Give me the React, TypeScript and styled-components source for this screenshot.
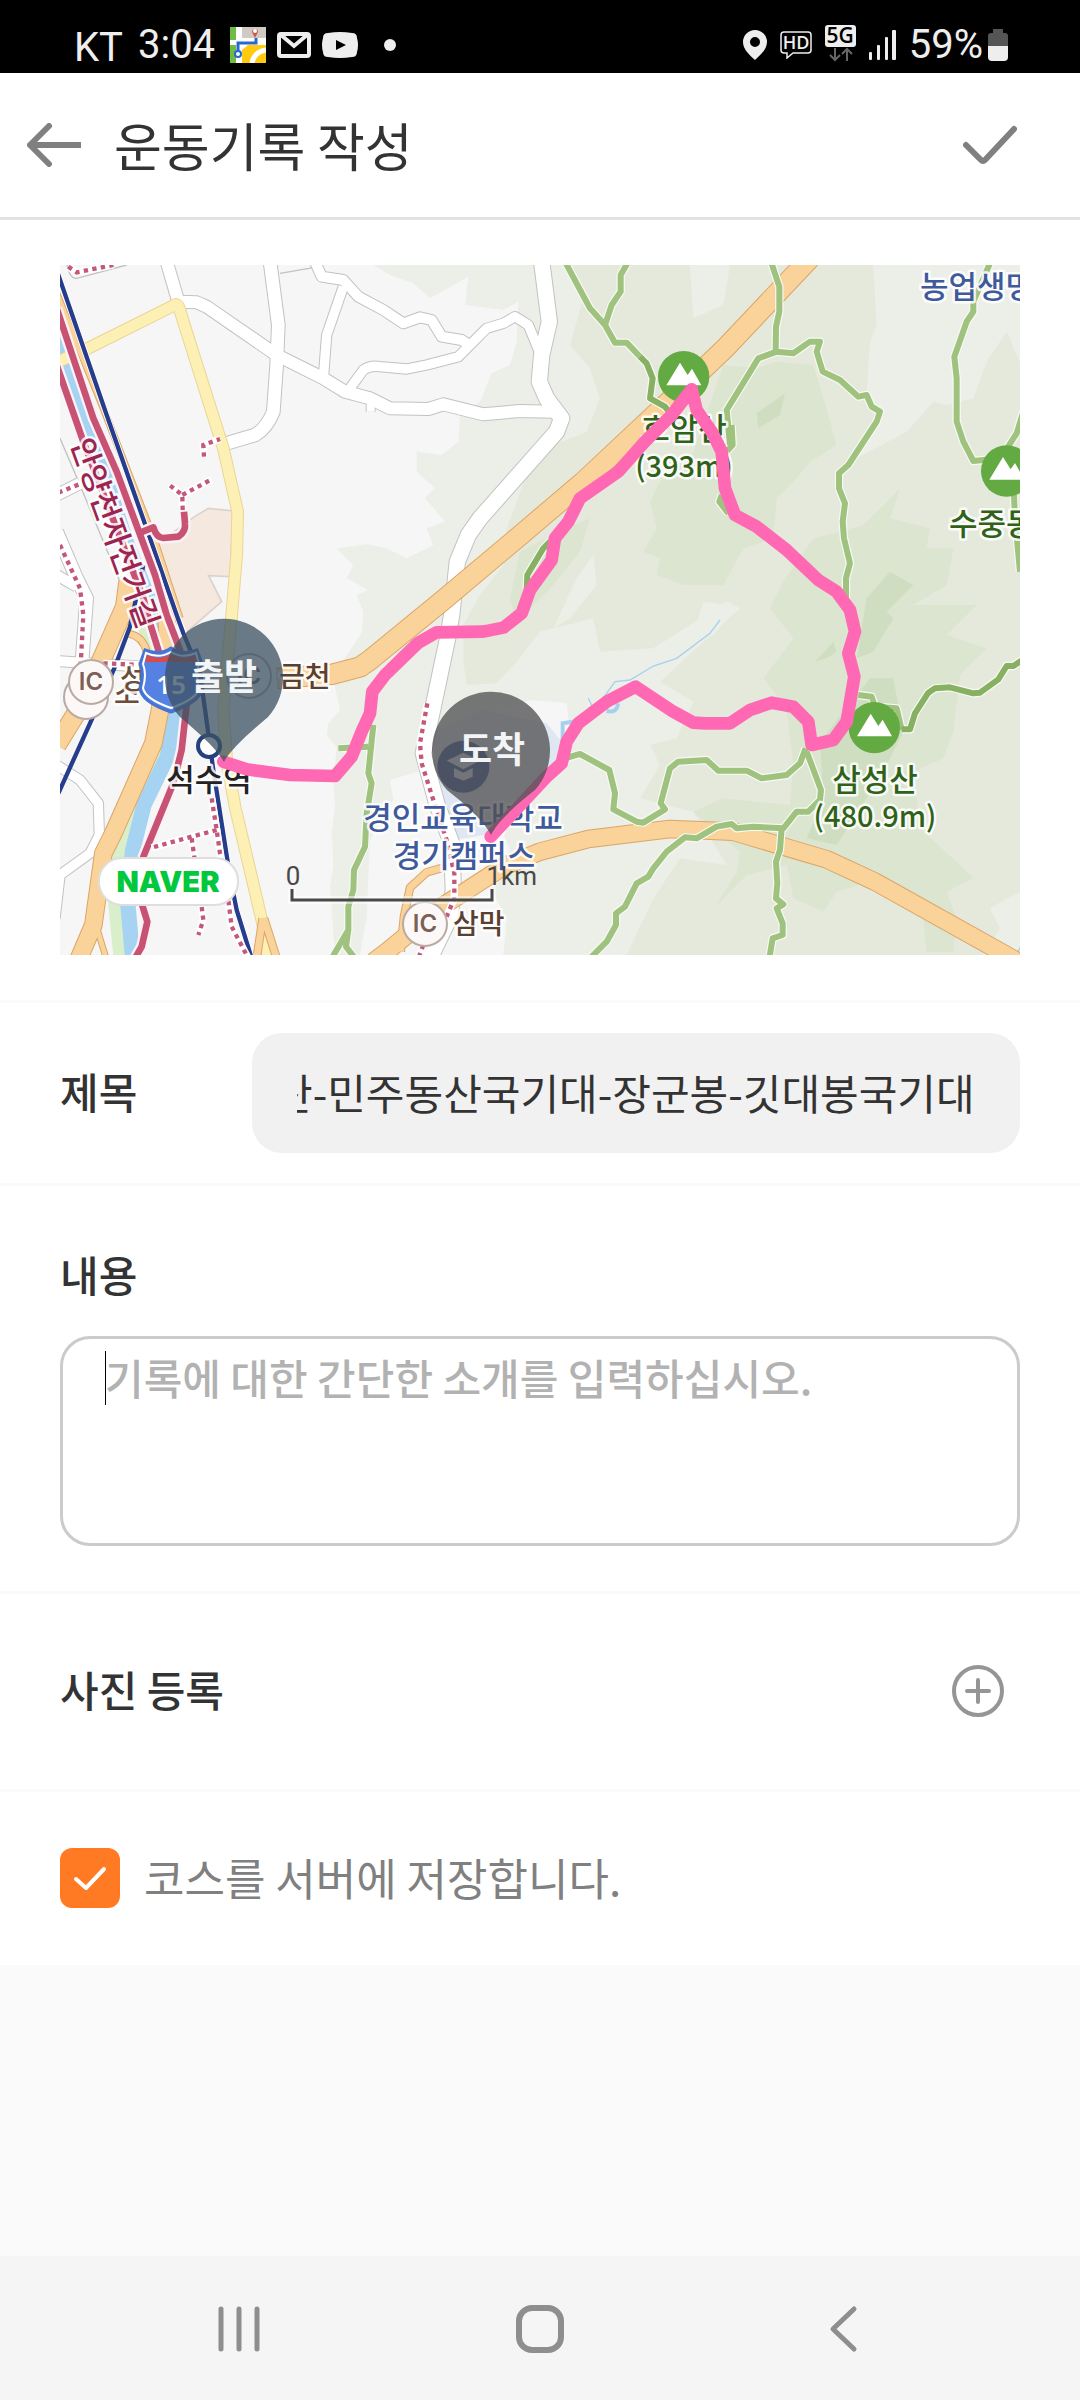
import React, { useLayoutEffect, useRef, useState } from "react";
import styled, { createGlobalStyle } from "styled-components";

const KR = '"Noto Sans CJK KR", "Noto Sans", sans-serif';
const LATIN = 'Roboto, "Noto Sans", sans-serif';

const GlobalStyle = createGlobalStyle`
  *, *::before, *::after { box-sizing: border-box; }
  body { margin: 0; background: #fafafa; font-family: ${KR}; color: #333; }
  button, input, textarea { font: inherit; color: inherit; }
`;

const Screen = styled.div`
  display: flex;
  flex-direction: column;
  min-height: 100vh;
`;

const StatusBar = styled.div`
  display: flex;
  justify-content: space-between;
  align-items: center;
  height: 73px;
  padding: 16px 72px 0 74px;
  background: #000;
  color: #eee;
  font-family: ${LATIN};
  svg { display: block; flex: none; }
`;

const StatusGroup = styled.div<{ $gap: number }>`
  display: flex;
  align-items: center;
  gap: ${(p) => p.$gap}px;
`;

const Carrier = styled.span`
  font-size: 40px;
  line-height: 48px;
  padding-top: 6px;
`;

const StatusText = styled.span`
  font-size: 40px;
  line-height: 48px;
`;

const MoreDot = styled.span`
  width: 12px;
  height: 12px;
  margin-left: 15px;
  border-radius: 50%;
  background: #eee;
`;

const Header = styled.header`
  display: flex;
  align-items: center;
  gap: 33px;
  height: 147px;
  padding: 0 63px 0 27px;
  background: #fff;
  border-bottom: 3px solid #e2e2e2;
`;

const Title = styled.h1`
  flex: 1;
  margin: 0;
  font-size: 52px;
  line-height: 76px;
  font-weight: 400;
`;

const IconButton = styled.button`
  display: flex;
  padding: 0;
  border: 0;
  background: none;
`;

const Section = styled.section<{ $pad: string; $last?: boolean }>`
  padding: ${(p) => p.$pad};
  background: #fff;
  border-bottom: ${(p) => (p.$last ? "0" : "3px solid #fafafa")};
`;

const MapView = styled.svg`
  display: block;
  width: 100%;
  height: auto;
`;

const Row = styled.div`
  display: flex;
  align-items: center;
`;

const SpreadRow = styled(Row)`
  justify-content: space-between;
`;

const fieldName = `
  padding-bottom: 4px;
  font-size: 42px;
  line-height: 56px;
  font-weight: 500;
`;

const FieldLabel = styled.label<{ $width?: number }>`
  ${fieldName}
  display: block;
  width: ${(p) => (p.$width ? p.$width + "px" : "auto")};
`;

const FieldHeading = styled.h2`
  ${fieldName}
  margin: 0;
`;

const TitleInput = styled.input`
  flex: 1;
  min-width: 0;
  height: 120px;
  padding: 0 45px 4px;
  border: 0;
  border-radius: 30px;
  background: #f1f1f1;
  font-size: 42px;
  outline: none;
`;

const NoteBox = styled.div`
  position: relative;
  margin-top: 30px;
`;

const NoteInput = styled.textarea`
  display: block;
  width: 100%;
  height: 210px;
  padding: 8px 42px;
  border: 3px solid #cbcbcb;
  border-radius: 30px;
  background: #fff;
  font-size: 42px;
  line-height: 60px;
  font-weight: 500;
  resize: none;
  outline: none;
  &::placeholder { color: #b2b2b2; opacity: 1; }
`;

const Caret = styled.span`
  position: absolute;
  left: 45px;
  top: 15px;
  width: 1px;
  height: 54px;
  background: #000;
`;

const SaveLabel = styled.label`
  display: flex;
  align-items: center;
  gap: 24px;
  font-size: 44px;
  line-height: 65px;
  color: #808080;
`;

const CheckWrap = styled.span`
  display: grid;
  > * { grid-area: 1 / 1; }
  svg { pointer-events: none; }
`;

const CheckInput = styled.input`
  appearance: none;
  width: 60px;
  height: 60px;
  margin: 0;
  border-radius: 12px;
  background: #ccc;
  &:checked { background: #ff7a22; }
`;

const Filler = styled.div`
  flex: 1;
`;

const NavBar = styled.nav`
  display: grid;
  grid-template-columns: repeat(3, 1fr);
  align-items: center;
  justify-items: center;
  height: 144px;
  padding: 2px 87px 0 88px;
  background: #f5f5f5;
`;

const Stroke = (p: React.SVGProps<SVGSVGElement>) => (
  <svg fill="none" stroke="#808080" strokeLinecap="round" strokeLinejoin="round" aria-hidden="true" {...p} />
);

/* ---------- map drawing, in thirds of a pixel ---------- */

type LineProps = { d: string; w: number; fill: string; edge: string; e?: number };

const Roads = ({ items }: { items: LineProps[] }) => (
  <g fill="none" strokeLinejoin="round">
    {items.map((r, i) => (
      <path key={"e" + i} d={r.d} stroke={r.edge} strokeWidth={r.w + (r.e ?? 6)} />
    ))}
    {items.map((r, i) => (
      <path key={"f" + i} d={r.d} stroke={r.fill} strokeWidth={r.w} />
    ))}
  </g>
);

const street = (w: number, d: string): LineProps => ({ d, w, fill: "#fff", edge: "#c2c2c2" });
const highway = (w: number, d: string): LineProps => ({ d, w, fill: "#f9d399", edge: "#dba566" });
const trail = (d: string, fill = "#9fc27f"): LineProps => ({ d, w: 18, fill, edge: "#f7faf3", e: 7 });
const bike = (d: string): LineProps => ({ d, w: 20, fill: "#c85273", edge: "#fbf3f6", e: 14 });

const streets: LineProps[] = [
  street(46, "M1445 -10L1468 170L1445 270L1438 350L1460 400L1505 460L1490 500L1260 760L1225 810L1192 890L1175 1050L1165 1110L1090 1465L1130 1615L1175 1735L1180 1875L1170 1955L1110 2080"),
  street(36, "M320 -10L355 110L410 112L440 125L650 270L790 340L855 380L930 400L990 430L1105 432L1150 418L1270 448L1380 438L1480 440"),
  street(38, "M630 -10L655 180L650 300L640 440Q620 490 585 510L490 538"),
  street(30, "M765 -10L785 35L850 45L895 95L970 135L1030 175L1080 157L1115 165L1145 215L1205 225L1225 238"),
  street(28, "M850 65L800 210L790 340"),
  street(28, "M870 370L910 315Q930 300 960 305L1040 312L1100 300L1195 275L1230 240L1280 190L1330 175L1365 155L1405 180L1440 265"),
  street(24, "M932 440L932 405"),
  street(34, "M-10 690L60 655"),
  street(38, "M-10 800L50 940L80 1000L66 1190"),
  street(30, "M-10 930L50 965"),
  street(28, "M-10 1500L60 1545L115 1615L118 1710L90 1765L0 1830L-15 1960"),
  street(30, "M-10 1188L250 1205"),
];

const streetLines = "M660 25L760 8M0 520L60 660L190 975M20 -5Q30 45 50 40L200 0";

const highways: LineProps[] = [
  highway(58, "M2250 -20L2000 245L1890 350L1570 650L1370 820L1150 1005L930 1185L900 1206L815 1228L650 1240"),
  highway(50, "M2900 2105L2830 2065L2445 1850L2300 1783L2020 1700L1830 1692L1585 1722L1440 1760L1330 1805L1145 1925L980 2060L940 2090"),
  highway(20, "M1160 1805L1100 1822L1050 1868L1032 1955L1022 2060"),
  highway(16, "M-10 85L130 430L285 830L360 1060"),
  highway(54, "M205 950L195 1025L120 1195L70 1310L-10 1440"),
  highway(50, "M318 1000L325 1165L300 1335L280 1435L160 1705L130 1765L100 1980L55 2085"),
  highway(18, "M205 1105Q250 1115 260 1160"),
  highway(14, "M108 1980L140 2085"),
  highway(20, "M608 1960L590 2080M612 1960L650 2080"),
];

const trails: LineProps[] = [
  trail("M1515 -10L1590 130L1635 180L1665 233L1700 233L1740 275"),
  trail("M1705 -10L1682 30L1682 80L1655 120L1635 180"),
  trail("M1740 275L1760 295L1778 340L1770 400L1815 425L1850 470", "#88b062"),
  trail("M2133 -10L2158 65L2158 140L2148 185L2147 260"),
  trail("M2010 540L2000 435L2040 370L2095 280L2150 260L2200 265L2250 230L2280 230L2270 260L2288 320L2340 345L2395 395L2420 390L2435 425L2460 440L2450 470L2365 600L2337 625L2337 670L2355 715L2348 770L2352 820L2370 895L2358 940L2358 1020"),
  trail("M2792 -10L2740 110L2740 140L2720 170L2683 275L2690 340L2690 470L2710 530L2740 588L2800 582"),
  trail("M2890 440L2870 505L2835 560"),
  trail("M2862 690L2865 760L2880 920"),
  trail("M2237 1450L2220 1495L2180 1530L2105 1540L2060 1517L1975 1517L1940 1485L1855 1490L1830 1510L1802 1615L1815 1633L1750 1673L1730 1670L1660 1633L1665 1585L1648 1515L1560 1467L1510 1482"),
  trail("M2240 1460L2283 1575L2280 1605L2245 1640L2210 1640L2170 1690L2080 1685L2030 1690L2015 1677L1970 1685L1910 1720L1875 1717L1820 1760L1780 1810L1765 1835L1730 1855L1695 1925L1668 1945L1668 1980L1640 2030L1590 2080"),
  trail("M2165 1690L2160 1755L2148 1790L2152 1855L2148 1900L2170 1918L2150 1930L2168 1975L2168 2010L2138 2020L2128 2080"),
  trail("M2395 1290L2435 1295L2445 1325L2510 1330L2525 1395"),
  trail("M2525 1393L2550 1393L2565 1345L2605 1283L2625 1270L2670 1267L2740 1285L2760 1283L2815 1243L2840 1203L2860 1203L2890 1183", "#88b062"),
  trail("M940 1380L925 1525L935 1555L920 1645L915 1745L882 1815L880 1875L865 1925L865 1995L815 2080M865 1995L858 2045L885 2080"),
  trail("M835 1450L925 1445"),
  trail("M1400 975L1402 930L1450 850L1470 830", "#88b062"),
  trail("M2015 480L2018 540L1990 570M1985 690L1978 710L2005 745"),
];

const bikeRoads: LineProps[] = [
  bike("M-10 130L100 460L170 620L285 930L320 1050L360 1155L382 1300L365 1455L340 1555L250 1775L245 1915L262 1970L245 2045L225 2080"),
  bike("M-10 300L70 530L250 1000L270 1075L295 1155L300 1210"),
  bike("M235 805L280 787Q290 820 310 819L355 815Q378 800 375 775L372 740"),
];

const bikeDots =
  "M368 735L367 690L328 660M367 690L455 643M432 575L430 540L480 522M-5 683L65 655M0 840L60 970L70 1050L62 1200" +
  "M25 5L50 22L160 0M130 1195L250 1200M455 1600L470 1695L480 1765L505 1905L515 1985L565 2080M470 1695L395 1715L275 1748" +
  "M395 1720L405 1790M422 1900L430 1965L415 2010M1102 1315L1080 1435L1085 1495L1120 1605L1160 1725L1183 1825L1183 1900L1160 1955M1090 2040L1075 2080";

const routePath =
  "M490 1490L560 1513L690 1530L825 1533L875 1475L905 1400L930 1345L937 1280L975 1230L1075 1133L1130 1102L1270 1100L1330 1088L1385 1045L1410 975L1475 885L1485 820L1525 770L1560 700L1675 620L1750 535L1835 450L1895 373L1910 435L1955 500L1985 560L1995 670L2025 750L2090 785L2180 855L2275 945L2330 980L2370 1035L2385 1100L2365 1165L2383 1235L2360 1370L2320 1425L2255 1440L2245 1370L2200 1325L2135 1313L2070 1335L2010 1375L1935 1375L1900 1373L1840 1340L1727 1265L1640 1310L1555 1375L1520 1430L1505 1495L1460 1535L1400 1600L1292 1715";

const Terrain = () => (
  <g>
    <rect width="2880" height="2070" fill="#f6f6f6" />
    <path fill="#ecefe8" d="M940 0L990 30L1060 55L1110 100L1225 35L1215 120L1330 135L1375 110L1370 230L1350 300L1295 325L1260 410L1200 450L1195 530L1145 570L1070 560L1070 620L1125 670L1095 700L1155 770L1100 790L1120 840L1040 880L980 850L920 838L830 850L880 900L860 940L925 975L890 990L910 1040L905 1105L850 1185L820 1245L840 1335L805 1375L800 1410L830 1445L820 1545L825 1625L815 1705L820 1805L810 1865L825 2070H2880V0Z" />
    <path fill="#f6f6f6" d="M900 2070L920 1955L930 1725L1000 1605L990 1545L1120 1505L1120 1405L1410 1305L1520 1315L1530 1405L1450 1485L1330 1705L1350 1755L1300 1885L1340 1965L1330 2070Z" />
    <path fill="#e5e9dc" d="M1530 0L1550 60L1610 210L1640 190L1720 145L1790 150L1890 190V0ZM1530 0L1570 100L1530 240L1590 310L1620 400L1580 500L1480 540L1400 630L1340 790L1330 900L1260 990L1210 1080L1210 1190L1220 1260L1310 1255L1370 1190L1440 1100L1600 1060L1620 1160L1780 1150L1890 1080L2000 1010L2040 1030L1930 1130L1800 1250L1900 1310L1850 1420L1770 1440L1800 1500L1740 1600L1900 1640L2000 1800L1860 1780L1780 1900L1700 2070H2770L2820 1990L2790 1930L2880 1880V290L2840 200L2780 290L2740 400L2660 420L2620 410L2540 500L2390 580L2470 450L2420 380L2430 230L2450 180L2440 0Z" />
    <path fill="#ecefe8" d="M1600 870L1610 960L1530 1060L1480 1090L1550 940ZM1930 1010L2030 1025L1960 1110L1890 1140ZM1890 0H2010L1990 120L1900 160Z" />
    <path fill="#dbe5d0" d="M1990 300L2090 310L2150 290L2260 300L2290 400L2330 540L2250 590L2200 650L2150 700L2140 820L2050 850L1990 960L1870 960L1790 930L1800 880L1750 860L1790 790L1770 710L1800 650L1900 560ZM2260 820L2340 800L2410 780L2520 670L2490 760L2610 790L2600 850L2680 850L2660 960L2560 1020H2750L2660 1110L2780 1150L2700 1230L2680 1400L2650 1480L2560 1520L2580 1690L2700 1800L2740 1840L2660 1880L2690 1960L2680 2060H2600L2590 1960L2460 1840L2330 1880L2290 1940L2200 1900L2180 1800L2060 1830L1970 1920L2030 1820L2040 1760L1900 1640L1990 1600L2190 1620L2200 1500L2180 1330L2110 1240L2200 1120L2130 1030L2170 950ZM1380 860L1500 800L1590 760L1560 860L1480 960L1370 1070L1350 1000Z" />
    <path fill="#cfdec1" d="M2090 445L2175 385L2160 450L2095 490ZM2420 1000L2490 920L2560 960L2480 1040L2500 1060L2440 1160L2390 1180ZM2265 1190L2320 1130L2330 1160L2300 1180ZM2280 1430L2430 1240L2500 1240L2530 1400L2470 1520L2330 1740L2240 1720L2290 1600Z" />
    <path fill="#f5e8de" stroke="#ddd2cb" strokeWidth="5" d="M295 835L400 757L445 730L520 738L510 935L446 932L485 1010L370 1110Z" />
    <path fill="#dfe8f2" d="M1120 1405L1270 1335L1460 1375L1510 1435L1490 1505L1310 1705L1180 1725L1130 1625Z" />
    <g fill="none">
      <path stroke="#d9eecb" strokeWidth="50" d="M250 1040L280 1200L310 1380L215 1620L182 1755L168 1900L186 2080" />
      <path stroke="#a6d3f2" strokeWidth="36" d="M-15 190L40 350L110 540L200 820L290 1050" />
      <path stroke="#a6d3f2" strokeWidth="46" d="M290 1040L347 1340L322 1475L252 1620L218 1755L202 1900L218 2080" />
      <path stroke="#a6d0ee" strokeWidth="4" d="M1980 1065L1950 1105L1850 1180L1780 1203L1710 1245L1665 1250L1622 1310M1585 1300L1600 1330L1640 1330M2870 2070L2880 2048" />
      <path stroke="#a6d0ee" strokeWidth="12" d="M1508 1430L1508 1375L1555 1368M1640 1338Q1672 1345 1674 1315" />
    </g>
  </g>
);

const Peak = ({ x, y }: { x: number; y: number }) => (
  <g transform={`translate(${x} ${y})`}>
    <circle r="77" fill="#62aa41" />
    <path fill="#fff" d="M-52 26L-11 -42L12 -5L25 -24L53 26Z" />
  </g>
);

const Interchange = ({ x, y, blank }: { x: number; y: number; blank?: boolean }) => (
  <g transform={`translate(${x} ${y})`}>
    <circle r="22" fill="#fbf8f7" stroke="#b9aaa4" strokeWidth="2" />
    {!blank && (
      <text y="8" textAnchor="middle" fontFamily="Inter, sans-serif" fontWeight="600" fontSize="24" fill="#7c6055">IC</text>
    )}
  </g>
);

const MapText = styled.text<{ $size?: number }>`
  font-family: ${KR};
  font-size: ${(p) => p.$size ?? 31}px;
  font-weight: 500;
  paint-order: stroke;
  stroke: rgba(255, 255, 255, 0.85);
  stroke-width: 5px;
  stroke-linejoin: round;
`;

const PinText = styled.text`
  font-family: ${KR};
  font-size: 36px;
  font-weight: 700;
  fill: #f2f4f6;
`;

const CourseMap = () => (
  <MapView viewBox="0 0 960 690" role="img" aria-label="코스 지도">
    <g transform="scale(0.33333)">
      <Terrain />
      <path d={streetLines} fill="none" stroke="#c2c2c2" strokeWidth="4" />
      <Roads items={streets} />
      <Roads items={[{ d: "M-10 292L80 252L340 122Q352 112 358 130L370 170L490 550L533 740L530 870L515 1050L490 1335L500 1485L525 1625L610 1985L625 2080", w: 32, fill: "#fdf0b4", edge: "#ead596" }]} />
      <Roads items={highways} />
      <Roads items={trails} />
      <g fill="none">
        <path stroke="#fff" strokeWidth="18" d="M-10 15L140 450L270 820L350 1050L420 1225L445 1405L460 1515L510 1835L530 1935L575 2080" />
        <path stroke="#263c8d" strokeWidth="13" d="M-10 15L140 450L270 820L350 1050L370 1105L420 1225L445 1405L460 1515L510 1835L530 1935L575 2080M250 900L210 1085L165 1205L90 1375L-5 1585" />
      </g>
      <Roads items={bikeRoads} />
      <path d={bikeDots} fill="none" stroke="#fff" strokeWidth="22" />
      <path d={bikeDots} fill="none" stroke="#c45878" strokeWidth="13" strokeDasharray="13 13" />
      <Peak x={1871} y={335} />
      <Peak x={2443} y={1388} />
      <Peak x={2840} y={618} />
      <g transform="translate(1210 1505)">
        <circle r="78" fill="#3f5c9f" />
        <path fill="#e8eef8" d="M0 -42L50 -18L0 8L-50 -18ZM-28 4L0 18L28 4V30L0 42L-28 30Z" />
      </g>
    </g>

    <MapText fill="#9c2450" textAnchor="middle" transform="translate(55 268) rotate(70)" y="11">안양천자전거길</MapText>
    <MapText fill="#2f6218" textAnchor="middle" x="624" y="175">호암산</MapText>
    <MapText fill="#2f6218" $size={29} textAnchor="middle" x="624" y="212">(393m)</MapText>
    <MapText fill="#2f6218" textAnchor="middle" x="815" y="526">삼성산</MapText>
    <MapText fill="#2f6218" $size={29} textAnchor="middle" x="815" y="562">(480.9m)</MapText>
    <MapText fill="#2f6218" x="889" y="270">수중동</MapText>
    <MapText fill="#3f5a9c" x="860" y="33">농업생명</MapText>
    <MapText fill="#6b4d38" $size={28} x="54" y="439">소</MapText>
    <MapText fill="#6b4d38" $size={28} x="60" y="424">성</MapText>
    <Interchange x={26} y={432} blank />
    <Interchange x={31} y={417} />
    <Interchange x={189} y={411} />
    <MapText fill="#5a4030" $size={28} x="219" y="422">금천</MapText>
    <MapText fill="#5a4030" $size={28} x="393" y="669">삼막</MapText>
    <Interchange x={365} y={659} />

    <g transform="translate(111 415)">
      <path d="M-26 -30Q-12 -24 0 -32Q12 -24 26 -30L31 -16Q27 -6 31 8Q30 22 0 32Q-30 22 -31 8Q-27 -6 -31 -16Z" fill="#5581e3" stroke="#4574d4" strokeWidth="3" />
      <path d="M-25 -27Q-12 -21 0 -28Q12 -21 25 -27L28 -16Q24 -6 28 8Q26 19 0 28Q-26 19 -28 8Q-24 -6 -28 -16Z" fill="#5581e3" stroke="#fff" strokeWidth="2" />
      <path d="M-24 -25Q-12 -19 0 -26Q12 -19 24 -25L26 -18H-26Z" fill="#d94a49" />
      <text y="14" textAnchor="middle" fontFamily="'Noto Sans', sans-serif" fontWeight="600" fontSize="26" fill="#fff">15</text>
    </g>

    <circle cx="149" cy="481" r="11" fill="#fff" stroke="#25407c" strokeWidth="4" />
    <MapText fill="#222" textAnchor="middle" x="149" y="526">석수역</MapText>
    <MapText fill="#3f5a9c" textAnchor="middle" x="403" y="564">경인교육대학교</MapText>
    <MapText fill="#3f5a9c" textAnchor="middle" x="404" y="602">경기캠퍼스</MapText>

    <path d={routePath} transform="scale(0.33333)" fill="none" stroke="#ff69b4" strokeWidth="38" strokeLinejoin="round" strokeLinecap="round" />

    <path d="M164 497C158 485 138 467 120 452A59 59 0 1 1 208 452C190 467 170 485 164 497Z" fill="#3d5163" fillOpacity="0.76" />
    <PinText textAnchor="middle" x="164" y="425">출발</PinText>
    <path d="M431 570C425 557 405 539 387 525A59 59 0 1 1 475 525C457 539 437 557 431 570Z" fill="#505052" fillOpacity="0.77" />
    <PinText textAnchor="middle" x="432" y="498">도착</PinText>

    <path d="M232 624V635H432V624" fill="none" stroke="#fff" strokeOpacity="0.5" strokeWidth="8" />
    <path d="M232 624V635H432V624" fill="none" stroke="#484848" strokeWidth="3" />
    <g fontFamily={LATIN} fontSize="26" fill="#484848">
      <text x="233" y="620" textAnchor="middle">0</text>
      <text x="477" y="620" textAnchor="end">1km</text>
    </g>

    <rect x="39" y="593" width="139" height="47" rx="23" fill="#fff" stroke="#dedede" strokeWidth="2" />
    <text x="108" y="627" textAnchor="middle" fontFamily="Inter, sans-serif" fontWeight="900" fontSize="29" fill="#03c73c">NAVER</text>
  </MapView>
);

const StatusIcons = {
  Map: () => (
    <svg width="36" height="36" viewBox="0 0 36 36" aria-hidden="true">
      <rect width="36" height="36" fill="#fff" />
      <path d="M0 0H6V13H0ZM0 18H6V36H0Z" fill="#6fbb44" />
      <path d="M12 0H36V11H12Z" fill="#cfcbc4" />
      <path d="M12 36V23L18 18H36V36Z" fill="#ffca0f" />
      <path d="M22 36Q24 25 36 23" fill="none" stroke="#fff" strokeWidth="5" />
      <path d="M8 26V16H26V11" fill="none" stroke="#2569d0" strokeWidth="3" />
      <circle cx="8" cy="27" r="3" fill="#fff" stroke="#2569d0" strokeWidth="2" />
      <path d="M25 11L22 5A3 3 0 1 1 28 5Z" fill="#cc5847" />
      <circle cx="25" cy="4" r="2" fill="#fff" />
    </svg>
  ),
  Mail: () => (
    <svg width="34" height="26" viewBox="0 0 34 26" fill="none" aria-hidden="true">
      <rect x="2" y="2" width="30" height="22" rx="2" stroke="#eee" strokeWidth="4" />
      <path d="M4 3L17 14L30 3" stroke="#eee" strokeWidth="4" />
    </svg>
  ),
  Video: () => (
    <svg width="36" height="26" viewBox="0 0 36 26" aria-hidden="true">
      <path d="M6 1Q18 -1 30 1Q35 1 35 6Q37 13 35 20Q35 25 30 25Q18 27 6 25Q1 25 1 20Q-1 13 1 6Q1 1 6 1Z" fill="#eee" />
      <path d="M14 8V18L24 13Z" fill="#000" />
    </svg>
  ),
  Place: () => (
    <svg width="24" height="30" viewBox="0 0 24 30" aria-hidden="true">
      <path fill="#eee" fillRule="evenodd" d="M12 0A12 12 0 0 1 24 12C24 20 16 26 12 30C8 26 0 20 0 12A12 12 0 0 1 12 0ZM12 7A5 5 0 1 0 12 17A5 5 0 1 0 12 7Z" />
    </svg>
  ),
  Hd: () => (
    <svg width="32" height="28" viewBox="0 0 32 28" aria-hidden="true">
      <path d="M4 1H28Q31 1 31 4V19Q31 22 28 22H13L7 27V22H4Q1 22 1 19V4Q1 1 4 1Z" fill="none" stroke="#eee" strokeWidth="1.500" />
      <text x="16" y="18" textAnchor="middle" fontFamily="'Open Sans', sans-serif" fontWeight="600" fontSize="18" fill="#eee">HD</text>
    </svg>
  ),
  FiveG: () => (
    <svg width="31" height="40" viewBox="0 0 31 40" aria-hidden="true">
      <rect width="31" height="22" rx="3" fill="#eee" />
      <text x="15" y="18" textAnchor="middle" fontFamily="'Open Sans', sans-serif" fontWeight="600" fontSize="21" fill="#000">5G</text>
      <path d="M10 23V35M5 30L10 35L15 30M22 36V24M17 29L22 24L27 29" stroke="#666" strokeWidth="2" fill="none" />
    </svg>
  ),
  Signal: () => (
    <svg width="27" height="30" viewBox="0 0 27 30" fill="#eee" aria-hidden="true">
      <rect x="0" y="22" width="3" height="8" rx="1" />
      <rect x="8" y="15" width="3" height="15" rx="1" />
      <rect x="16" y="7" width="3" height="23" rx="1" />
      <rect x="23" y="0" width="4" height="30" rx="1" />
    </svg>
  ),
  Battery: () => (
    <svg width="20" height="32" viewBox="0 0 20 32" aria-hidden="true">
      <path d="M5 0H15V4H17Q20 4 20 7V17H0V7Q0 4 3 4H5Z" fill="#555" />
      <path d="M0 17H20V28Q20 32 16 32H4Q0 32 0 28Z" fill="#eee" />
    </svg>
  ),
};

export default function App() {
  const [title, setTitle] = useState("산-민주동산국기대-장군봉-깃대봉국기대");
  const [note, setNote] = useState("");
  const [save, setSave] = useState(true);
  const titleRef = useRef<HTMLInputElement>(null);

  /* long course names show their end */
  useLayoutEffect(() => {
    const el = titleRef.current;
    if (el) el.scrollLeft = el.scrollWidth;
  }, []);

  return (
    <>
      <GlobalStyle />
      <Screen>
        <StatusBar>
          <StatusGroup $gap={15}>
            <Carrier>KT</Carrier>
            <StatusText>3:04</StatusText>
            <StatusGroup $gap={11}>
              <StatusIcons.Map />
              <StatusIcons.Mail />
              <StatusIcons.Video />
              <MoreDot />
            </StatusGroup>
          </StatusGroup>
          <StatusGroup $gap={13}>
            <StatusIcons.Place />
            <StatusIcons.Hd />
            <StatusIcons.FiveG />
            <StatusIcons.Signal />
            <StatusGroup $gap={5}>
              <StatusText>59%</StatusText>
              <StatusIcons.Battery />
            </StatusGroup>
          </StatusGroup>
        </StatusBar>

        <Header>
          <IconButton aria-label="뒤로">
            <Stroke width="54" height="44" viewBox="0 0 54 44" strokeWidth="6">
              <path d="M22 3L3 22L22 41" />
              <path d="M4 22H54" strokeLinecap="butt" />
            </Stroke>
          </IconButton>
          <Title>운동기록 작성</Title>
          <IconButton aria-label="완료">
            <Stroke width="54" height="40" viewBox="0 0 54 40" strokeWidth="6">
              <path d="M3 20L18 35Q20 37 22 35L51 4" />
            </Stroke>
          </IconButton>
        </Header>

        <main>
          <Section $pad="45px 60px">
            <CourseMap />
          </Section>

          <Section $pad="30px 60px">
            <Row>
              <FieldLabel htmlFor="title" $width={192}>제목</FieldLabel>
              <TitleInput id="title" ref={titleRef} value={title} onChange={(e) => setTitle(e.target.value)} />
            </Row>
          </Section>

          <Section $pad="60px 60px 45px">
            <FieldLabel htmlFor="note">내용</FieldLabel>
            <NoteBox>
              <NoteInput
                id="note"
                value={note}
                onChange={(e) => setNote(e.target.value)}
                placeholder="기록에 대한 간단한 소개를 입력하십시오."
              />
              {note === "" && <Caret />}
            </NoteBox>
          </Section>

          <Section $pad="67px 75px 68px 60px">
            <SpreadRow>
              <FieldHeading>사진 등록</FieldHeading>
              <IconButton aria-label="사진 추가">
                <Stroke width="54" height="54" viewBox="0 0 54 54" stroke="#959595" strokeWidth="4">
                  <circle cx="27" cy="27" r="24" />
                  <path d="M27 16V38M16 27H38" />
                </Stroke>
              </IconButton>
            </SpreadRow>
          </Section>

          <Section $pad="53px 60px 55px" $last>
            <SaveLabel>
              <CheckWrap>
                <CheckInput type="checkbox" checked={save} onChange={(e) => setSave(e.target.checked)} />
                {save && (
                  <Stroke width="60" height="60" viewBox="0 0 60 60" stroke="#fff" strokeWidth="4">
                    <path d="M16 31L26 40L44 21" />
                  </Stroke>
                )}
              </CheckWrap>
              코스를 서버에 저장합니다.
            </SaveLabel>
          </Section>
        </main>

        <Filler />

        <NavBar>
          <IconButton aria-label="최근 앱">
            <Stroke width="60" height="50" viewBox="0 0 60 50" stroke="#8e8e8e" strokeWidth="5">
              <path d="M12 5V45M30 5V45M48 5V45" />
            </Stroke>
          </IconButton>
          <IconButton aria-label="홈">
            <Stroke width="50" height="50" viewBox="0 0 50 50" stroke="#8e8e8e" strokeWidth="6">
              <rect x="4" y="4" width="42" height="42" rx="13" />
            </Stroke>
          </IconButton>
          <IconButton aria-label="뒤로 가기">
            <Stroke width="50" height="50" viewBox="0 0 50 50" stroke="#8e8e8e" strokeWidth="5">
              <path d="M37 5L16 25L37 45" />
            </Stroke>
          </IconButton>
        </NavBar>
      </Screen>
    </>
  );
}
